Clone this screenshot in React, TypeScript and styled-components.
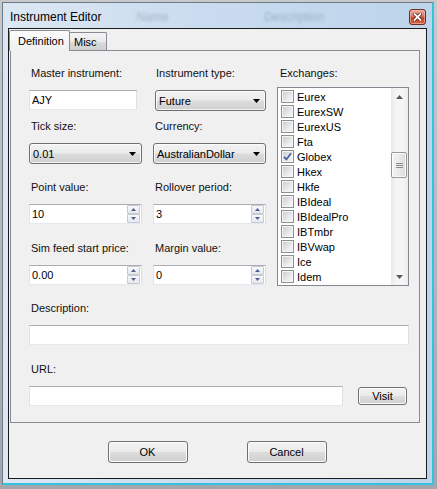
import React from 'react';
import styled, { createGlobalStyle, css } from 'styled-components';

const GlobalStyle = createGlobalStyle`
  html, body {
    margin: 0;
    padding: 0;
  }
  body {
    background: #9fa2a6;
    font-family: "Liberation Sans", Arial, sans-serif;
    font-size: 11px;
    color: #000;
  }
  * {
    box-sizing: border-box;
  }
`;

const uiFont = css`
  font-family: "Liberation Sans", Arial, sans-serif;
  font-size: 11px;
  color: #000;
`;

const Screen = styled.div`
  width: 437px;
  height: 489px;
  padding: 2px 0 0 2px;
  overflow: hidden;
  background: linear-gradient(180deg, #c8c9cb 0%, #a3a6aa 100%);
`;

const Window = styled.div`
  width: 432px;
  height: 483px;
  display: flex;
  flex-direction: column;
  padding: 0 5px 4px 5px;
  background: linear-gradient(90deg, #dce7f3 0%, #cadcef 45%, #bdd4eb 100%);
  border-left: 1px solid #6c7986;
  border-top: 1px solid #6c7986;
  border-right: 2px solid #35c2e2;
  border-bottom: 2px solid #35c2e2;
`;

const TitleBar = styled.div`
  height: 25px;
  flex-shrink: 0;
  display: flex;
  align-items: center;
  padding-top: 2px;
`;

const Title = styled.div`
  margin-left: 2px;
  font-family: "Liberation Sans", Arial, sans-serif;
  font-size: 12px;
  color: #000;
  white-space: nowrap;
`;

const Ghost = styled.div<{ $gap: number }>`
  margin-left: ${p => p.$gap}px;
  font-size: 12px;
  color: rgba(80, 100, 120, 0.35);
  filter: blur(1.4px);
  white-space: nowrap;
`;

const CloseButton = styled.div`
  margin-left: auto;
  margin-right: 1px;
  width: 17px;
  height: 16px;
  border: 1px solid #6a2d1e;
  border-radius: 3px;
  background: linear-gradient(180deg, #e9a898 0%, #d9775f 45%, #c7452a 55%, #d2633f 100%);
  box-shadow: inset 0 0 0 1px rgba(255, 220, 210, 0.45);
  display: flex;
  align-items: center;
  justify-content: center;
`;

const Client = styled.div`
  height: 451px;
  flex-shrink: 0;
  border: 1px solid #1b1b1b;
  background: #f0f0f0;
  padding: 1px 0 0 1px;
  display: flex;
  flex-direction: column;
`;

const TabControl = styled.div`
  width: 410px;
  display: flex;
  flex-direction: column;
`;

const TabStrip = styled.div`
  height: 20px;
  display: flex;
  align-items: flex-end;
`;

const Tab = styled.div<{ $active?: boolean }>`
  position: relative;
  display: flex;
  align-items: center;
  border: 1px solid #898c95;
  border-bottom: none;
  border-radius: 2px 2px 0 0;
  white-space: nowrap;
  ${uiFont};
  ${p =>
    p.$active
      ? css`
          z-index: 1;
          width: 61px;
          height: 21px;
          margin: 0 0 -1px -1px;
          padding: 0 0 1px 8px;
          background: linear-gradient(180deg, #fbfbfb 0%, #f0f0f0 100%);
        `
      : css`
          width: 38px;
          height: 18px;
          margin-left: -1px;
          padding: 0 0 0 4px;
          background: linear-gradient(180deg, #f3f3f3 0%, #ebebeb 50%, #dcdcdc 51%, #cfcfcf 100%);
        `}
`;

const Panel = styled.div`
  height: 373px;
  border: 1px solid #898c95;
  background: #f0f0f0;
  padding: 16px 10px 0 18px;
`;

const TopGrid = styled.div`
  display: grid;
  grid-template-columns: 113px 113px 132px;
  grid-template-rows: 53px 61px 61px 44px;
  column-gap: 11px;
`;

const Field = styled.div<{ $rows?: number; $col?: number; $top?: number }>`
  display: flex;
  flex-direction: column;
  align-items: flex-start;
  margin-top: ${p => p.$top ?? 0}px;
  ${p => p.$col && css`grid-column: ${p.$col};`}
  ${p => p.$rows && css`grid-row: 1 / span ${p.$rows};`}
`;

const Label = styled.div<{ $gap?: number; $indent?: number }>`
  height: 13px;
  line-height: 13px;
  margin-bottom: ${p => p.$gap ?? 10}px;
  padding-left: ${p => p.$indent ?? 2}px;
  white-space: nowrap;
  color: #111;
`;

const fieldBox = css`
  border: 1px solid;
  border-color: #abadb3 #dbdfe6 #e3e9ef #e2e3ea;
  background: #fff;
`;

const TextBox = styled.input<{ $width?: number }>`
  ${fieldBox};
  ${uiFont};
  width: ${p => (p.$width ? `${p.$width}px` : '100%')};
  height: 20px;
  padding: 0 2px;
  outline: none;
`;

const Combo = styled.div<{ $shift?: number }>`
  width: ${p => 113 - (p.$shift ?? 0)}px;
  height: 21px;
  margin-left: ${p => p.$shift ?? 0}px;
  display: flex;
  align-items: center;
  justify-content: space-between;
  padding: 0 5px 0 3px;
  border: 1px solid #707070;
  border-radius: 3px;
  background: linear-gradient(180deg, #f2f2f2 0%, #ebebeb 48%, #dddddd 52%, #cfcfcf 100%);
  box-shadow: inset 0 0 0 1px rgba(255, 255, 255, 0.75);
  white-space: nowrap;
`;

const Numeric = styled.div`
  ${fieldBox};
  width: 113px;
  height: 20px;
  display: flex;
  padding-right: 1px;
`;

const NumericInput = styled.input`
  ${uiFont};
  flex: 1;
  min-width: 0;
  border: none;
  background: transparent;
  padding: 0 2px;
  outline: none;
`;

const Spin = styled.div`
  width: 13px;
  display: flex;
  flex-direction: column;
`;

const SpinButton = styled.div`
  flex: 1;
  display: flex;
  align-items: center;
  justify-content: center;
  border: 1px solid #c5cad3;
  border-radius: 1px;
  background: linear-gradient(180deg, #f7f8fa 0%, #e4e8ee 100%);
`;

const ListBox = styled.div`
  flex: 1;
  align-self: stretch;
  display: flex;
  border: 1px solid #828790;
  background: #fff;
  overflow: hidden;
`;

const Items = styled.div`
  flex: 1;
  padding-top: 1px;
`;

const Item = styled.div`
  height: 15px;
  display: flex;
  align-items: center;
  gap: 3px;
  padding-left: 3px;
  white-space: nowrap;
`;

const Check = styled.div`
  width: 13px;
  height: 13px;
  flex-shrink: 0;
  border: 1px solid #8e8f8f;
  background: linear-gradient(135deg, #c6cad0 0%, #eeeff0 70%, #f7f7f7 100%);
  box-shadow: inset 0 0 0 1px #f4f4f4;
  display: flex;
  align-items: center;
  justify-content: center;
`;

const ScrollBar = styled.div`
  width: 17px;
  display: flex;
  flex-direction: column;
  background: linear-gradient(90deg, #e8e8e8 0%, #f5f5f5 30%, #f5f5f5 70%, #ebebeb 100%);
`;

const ScrollArrow = styled.div`
  height: 17px;
  display: flex;
  align-items: center;
  justify-content: center;
`;

const ScrollTrack = styled.div`
  flex: 1;
  display: flex;
  flex-direction: column;
`;

const Thumb = styled.div<{ $offset: number }>`
  margin: ${p => p.$offset}px 1px 0 0;
  height: 26px;
  border: 1px solid #989898;
  border-radius: 2px;
  background: linear-gradient(90deg, #f4f4f4 0%, #eaeaea 50%, #dcdcdc 100%);
  box-shadow: inset 0 0 0 1px rgba(255, 255, 255, 0.8);
  display: flex;
  align-items: center;
  justify-content: center;
`;

const UrlRow = styled.div`
  display: flex;
  align-items: center;
  gap: 15px;
  width: 100%;
`;

const Button = styled.button<{ $w: number; $h: number }>`
  ${uiFont};
  width: ${p => p.$w}px;
  height: ${p => p.$h}px;
  padding: 0;
  border: 1px solid #707070;
  border-radius: 3px;
  background: linear-gradient(180deg, #f2f2f2 0%, #ebebeb 48%, #dddddd 52%, #cfcfcf 100%);
  box-shadow: inset 0 0 0 1px #fcfcfc;
  cursor: default;
`;

const ButtonRow = styled.div`
  display: flex;
  justify-content: center;
  gap: 59px;
  margin-top: 18px;
  padding-right: 2px;
`;

const DownTriangle = ({ color = '#000' }: { color?: string }) => (
  <svg width="7" height="4" viewBox="0 0 7 4">
    <polygon points="0,0 7,0 3.5,4" fill={color} />
  </svg>
);

const SpinArrow = ({ up }: { up?: boolean }) => (
  <svg width="5" height="3" viewBox="0 0 5 3">
    <polygon points={up ? '0,3 5,3 2.5,0' : '0,0 5,0 2.5,3'} fill="#4d5f8d" />
  </svg>
);

const ScrollGlyph = ({ up }: { up?: boolean }) => (
  <svg width="7" height="4" viewBox="0 0 7 4">
    <polygon points={up ? '0,4 7,4 3.5,0' : '0,0 7,0 3.5,4'} fill="#5a5a5a" />
  </svg>
);

const NumericField = ({ value }: { value: string }) => (
  <Numeric>
    <NumericInput defaultValue={value} />
    <Spin>
      <SpinButton>
        <SpinArrow up />
      </SpinButton>
      <SpinButton>
        <SpinArrow />
      </SpinButton>
    </Spin>
  </Numeric>
);

const exchanges = [
  'Eurex',
  'EurexSW',
  'EurexUS',
  'Fta',
  'Globex',
  'Hkex',
  'Hkfe',
  'IBIdeal',
  'IBIdealPro',
  'IBTmbr',
  'IBVwap',
  'Ice',
  'Idem',
];

const App = () => {
  return (
    <>
      <GlobalStyle />
      <Screen>
        <Window>
          <TitleBar>
            <Title>Instrument Editor</Title>
            <Ghost $gap={35}>Name</Ghost>
            <Ghost $gap={96}>Description</Ghost>
            <CloseButton>
              <svg width="9" height="8" viewBox="0 0 9 8">
                <path
                  d="M1.5 1 L7.5 7 M7.5 1 L1.5 7"
                  stroke="#4a1a10"
                  strokeWidth="3.2"
                  strokeLinecap="square"
                />
                <path
                  d="M1.5 1 L7.5 7 M7.5 1 L1.5 7"
                  stroke="#ffffff"
                  strokeWidth="1.8"
                  strokeLinecap="square"
                />
              </svg>
            </CloseButton>
          </TitleBar>

          <Client>
            <TabControl>
              <TabStrip>
                <Tab $active>Definition</Tab>
                <Tab>Misc</Tab>
              </TabStrip>
              <Panel>
                <TopGrid>
                  <Field $col={3} $rows={4}>
                    <Label $gap={7} $indent={3}>Exchanges:</Label>
                    <ListBox>
                      <Items>
                        {exchanges.map(name => (
                          <Item key={name}>
                            <Check>
                              {name === 'Globex' && (
                                <svg width="9" height="9" viewBox="0 0 9 9">
                                  <path
                                    d="M1 4.8 L3.4 7.4 L8 1.2"
                                    fill="none"
                                    stroke="#4b5c9c"
                                    strokeWidth="1.7"
                                  />
                                </svg>
                              )}
                            </Check>
                            <span>{name}</span>
                          </Item>
                        ))}
                      </Items>
                      <ScrollBar>
                        <ScrollArrow>
                          <ScrollGlyph up />
                        </ScrollArrow>
                        <ScrollTrack>
                          <Thumb $offset={47}>
                            <svg width="7" height="7" viewBox="0 0 7 7">
                              <path d="M0 1.5 H7 M0 3.5 H7 M0 5.5 H7" stroke="#8a8a8a" strokeWidth="1" />
                            </svg>
                          </Thumb>
                        </ScrollTrack>
                        <ScrollArrow>
                          <ScrollGlyph />
                        </ScrollArrow>
                      </ScrollBar>
                    </ListBox>
                  </Field>

                  <Field>
                    <Label>Master instrument:</Label>
                    <TextBox $width={108} defaultValue="AJY" />
                  </Field>
                  <Field>
                    <Label $indent={3}>Instrument type:</Label>
                    <Combo $shift={2}>
                      <span>Future</span>
                      <DownTriangle />
                    </Combo>
                  </Field>

                  <Field>
                    <Label>Tick size:</Label>
                    <Combo>
                      <span>0.01</span>
                      <DownTriangle />
                    </Combo>
                  </Field>
                  <Field>
                    <Label>Currency:</Label>
                    <Combo>
                      <span>AustralianDollar</span>
                      <DownTriangle />
                    </Combo>
                  </Field>

                  <Field>
                    <Label>Point value:</Label>
                    <NumericField value="10" />
                  </Field>
                  <Field>
                    <Label>Rollover period:</Label>
                    <NumericField value="3" />
                  </Field>

                  <Field>
                    <Label>Sim feed start price:</Label>
                    <NumericField value="0.00" />
                  </Field>
                  <Field>
                    <Label>Margin value:</Label>
                    <NumericField value="0" />
                  </Field>
                </TopGrid>

                <Field $top={16}>
                  <Label>Description:</Label>
                  <TextBox $width={380} />
                </Field>

                <Field $top={18}>
                  <Label>URL:</Label>
                  <UrlRow>
                    <TextBox $width={314} />
                    <Button $w={49} $h={18}>Visit</Button>
                  </UrlRow>
                </Field>
              </Panel>
            </TabControl>

            <ButtonRow>
              <Button $w={80} $h={22}>OK</Button>
              <Button $w={80} $h={22}>Cancel</Button>
            </ButtonRow>
          </Client>
        </Window>
      </Screen>
    </>
  );
};

export default App;
